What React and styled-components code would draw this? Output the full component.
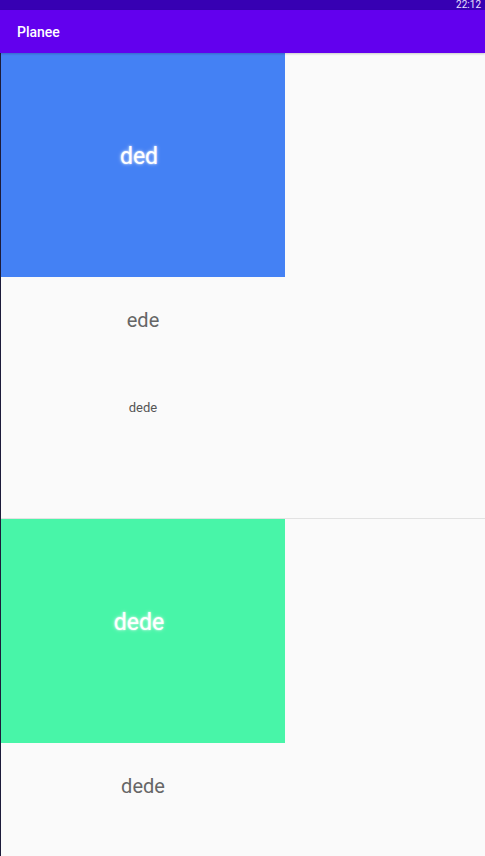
import React from 'react';
import styled, { createGlobalStyle } from 'styled-components';

const GlobalStyle = createGlobalStyle`
  html, body {
    margin: 0;
    padding: 0;
    background: #fafafa;
    font-family: Roboto, "Noto Sans", sans-serif;
  }
`;

const Screen = styled.div`
  width: 485px;
  height: 856px;
  overflow: hidden;
  background: #fafafa;
  display: flex;
  flex-direction: column;
`;

const StatusBar = styled.div`
  height: 10px;
  flex-shrink: 0;
  background: #3700b3;
  display: flex;
  justify-content: flex-end;
  align-items: center;
  padding-right: 4px;
  color: #e8e0ff;
  font-size: 10px;
  line-height: 10px;
`;

const AppBar = styled.div`
  height: 43px;
  flex-shrink: 0;
  background: #6200ee;
  display: flex;
  align-items: center;
  padding-left: 17px;
  color: #fff;
  font-size: 14px;
  font-weight: 500;
  box-shadow: 0 1px 2px rgba(0, 0, 0, 0.2);
  position: relative;
  z-index: 1;
`;

const List = styled.div`
  flex: 1;
  min-height: 0;
  overflow: hidden;
  border-left: 1px solid #1c1b3a;
  display: flex;
  flex-direction: column;
`;

const Card = styled.div`
  height: 465px;
  flex-shrink: 0;
  border-bottom: 1px solid #e2e2e2;
  display: flex;
  flex-direction: column;
`;

const Cover = styled.div`
  width: 284px;
  height: 224px;
  flex-shrink: 0;
  background: ${p => p.$color};
  display: flex;
  align-items: center;
  justify-content: center;
  padding: 0 8px 18px 0;
  box-sizing: border-box;
  color: #fff;
  font-size: 23px;
  text-shadow: 0 0 2px rgba(255, 255, 255, 0.9), 0 0 4px rgba(255, 255, 255, 0.5);
`;

const Title = styled.div`
  width: 284px;
  margin-top: 31px;
  text-align: center;
  font-size: 20px;
  line-height: 24px;
  color: #666;
`;

const Subtitle = styled.div`
  width: 284px;
  margin-top: 68px;
  text-align: center;
  font-size: 13px;
  line-height: 16px;
  color: #555;
`;

const items = [
  { cover: 'ded', color: '#4481f4', title: 'ede', sub: 'dede' },
  { cover: 'dede', color: '#48f5a8', title: 'dede' },
];

export default function App() {
  return (
    <Screen>
      <GlobalStyle />
      <StatusBar>22:12</StatusBar>
      <AppBar>Planee</AppBar>
      <List>
        {items.map((it, i) => (
          <Card key={i}>
            <Cover $color={it.color}>{it.cover}</Cover>
            <Title>{it.title}</Title>
            {it.sub && <Subtitle>{it.sub}</Subtitle>}
          </Card>
        ))}
      </List>
    </Screen>
  );
}
